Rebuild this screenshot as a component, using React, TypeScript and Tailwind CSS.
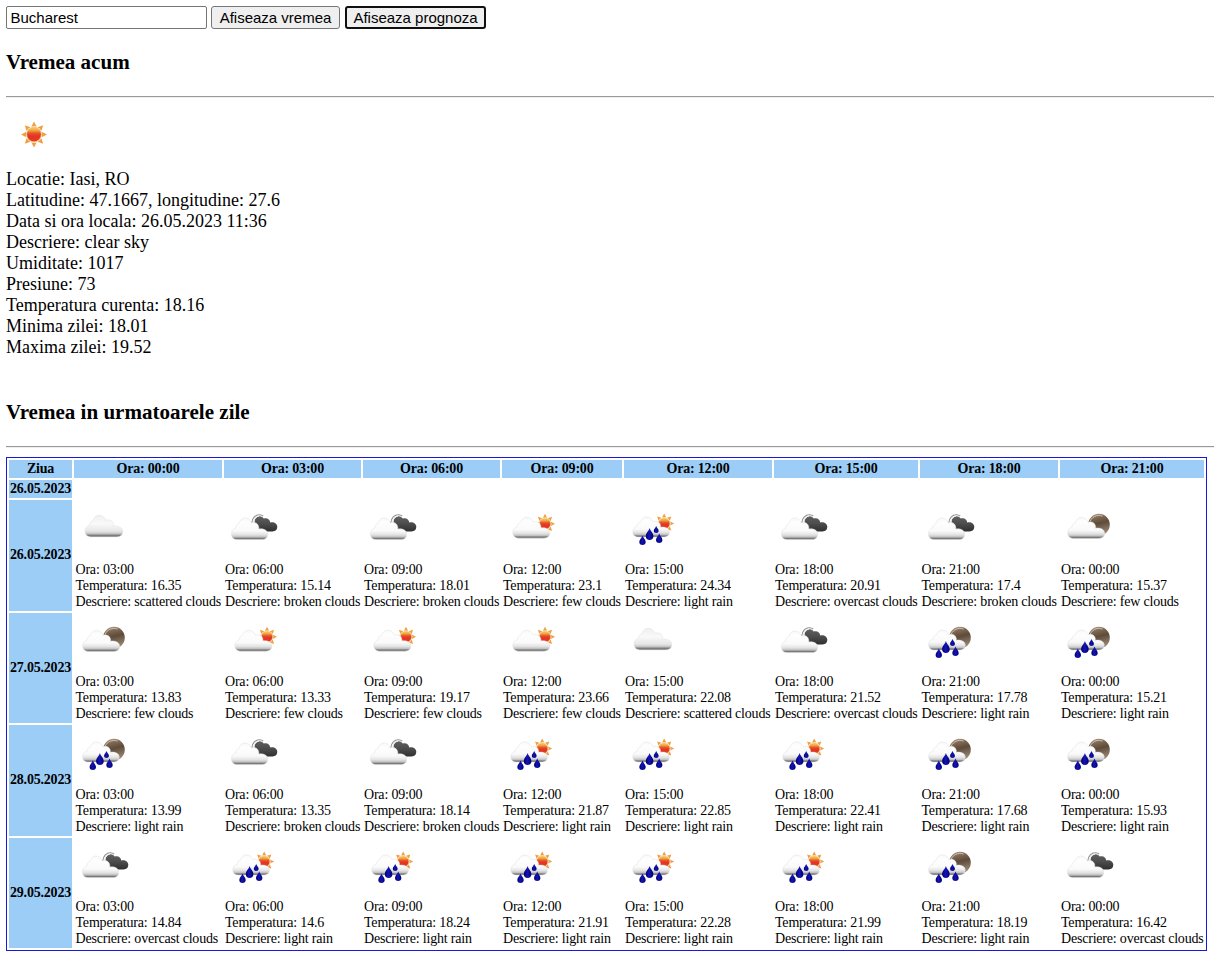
import React from "react";

type Kind = "cloud" | "broken" | "few" | "rain" | "fewNight" | "rainNight" | "clear";
type Entry = [hour: string, temp: string, desc: string, icon: Kind];

const hours = ["00:00", "03:00", "06:00", "09:00", "12:00", "15:00", "18:00", "21:00"];

const days: { date: string; rowClass: string; dateClass: string; iconClass: string; entries: Entry[] }[] = [
  {
    date: "26.05.2023",
    rowClass: "h-[111px]",
    dateClass: "pb-[3px]",
    iconClass: "h-[61px]",
    entries: [
      ["03:00", "16.35", "scattered clouds", "cloud"],
      ["06:00", "15.14", "broken clouds", "broken"],
      ["09:00", "18.01", "broken clouds", "broken"],
      ["12:00", "23.1", "few clouds", "few"],
      ["15:00", "24.34", "light rain", "rain"],
      ["18:00", "20.91", "overcast clouds", "broken"],
      ["21:00", "17.4", "broken clouds", "broken"],
      ["00:00", "15.37", "few clouds", "fewNight"],
    ],
  },
  {
    date: "27.05.2023",
    rowClass: "h-[110px]",
    dateClass: "pb-px",
    iconClass: "h-[60px]",
    entries: [
      ["03:00", "13.83", "few clouds", "fewNight"],
      ["06:00", "13.33", "few clouds", "few"],
      ["09:00", "19.17", "few clouds", "few"],
      ["12:00", "23.66", "few clouds", "few"],
      ["15:00", "22.08", "scattered clouds", "cloud"],
      ["18:00", "21.52", "overcast clouds", "broken"],
      ["21:00", "17.78", "light rain", "rainNight"],
      ["00:00", "15.21", "light rain", "rainNight"],
    ],
  },
  {
    date: "28.05.2023",
    rowClass: "h-[111px]",
    dateClass: "pb-[3px]",
    iconClass: "h-[61px]",
    entries: [
      ["03:00", "13.99", "light rain", "rainNight"],
      ["06:00", "13.35", "broken clouds", "broken"],
      ["09:00", "18.14", "broken clouds", "broken"],
      ["12:00", "21.87", "light rain", "rain"],
      ["15:00", "22.85", "light rain", "rain"],
      ["18:00", "22.41", "light rain", "rain"],
      ["21:00", "17.68", "light rain", "rainNight"],
      ["00:00", "15.93", "light rain", "rainNight"],
    ],
  },
  {
    date: "29.05.2023",
    rowClass: "h-[110px]",
    dateClass: "pb-px",
    iconClass: "h-[60px]",
    entries: [
      ["03:00", "14.84", "overcast clouds", "broken"],
      ["06:00", "14.6", "light rain", "rain"],
      ["09:00", "18.24", "light rain", "rain"],
      ["12:00", "21.91", "light rain", "rain"],
      ["15:00", "22.28", "light rain", "rain"],
      ["18:00", "21.99", "light rain", "rain"],
      ["21:00", "18.19", "light rain", "rainNight"],
      ["00:00", "16.42", "overcast clouds", "broken"],
    ],
  },
];

// Cloud outline in a 38 x 22 box.
const CLOUD =
  "M5.5 21.6C1.8 21.4 0 18.8 0 15.8C0 12.8 1.8 10.6 4.5 10C4.500 7.500 5.800 5.800 8 5.300C9 2 11 0 14 0C17.200 0 19.700 1.800 20.800 5C22.500 4.300 25.500 4.400 27 6C28.300 7.400 28.800 9 28.600 11C33 10.300 37.800 12 37.800 16.200C37.800 19.600 35.500 21.400 32 21.600Z";

const current = [
  "Locatie: Iasi, RO",
  "Latitudine: 47.1667, longitudine: 27.6",
  "Data si ora locala: 26.05.2023 11:36",
  "Descriere: clear sky",
  "Umiditate: 1017",
  "Presiune: 73",
  "Temperatura curenta: 18.16",
  "Minima zilei: 18.01",
  "Maxima zilei: 19.52",
];

function Defs() {
  return (
    <svg className="absolute size-0" aria-hidden="true">
      <defs>
        <linearGradient id="white" x1="0" y1="0" x2="0" y2="1">
          <stop offset="0" stopColor="#f8f8f8" />
          <stop offset="0.2" stopColor="#fefefe" />
          <stop offset="0.6" stopColor="#fafafa" />
          <stop offset="0.78" stopColor="#e2e2e2" />
          <stop offset="0.88" stopColor="#c0c0c0" />
          <stop offset="0.94" stopColor="#7c7c7c" />
          <stop offset="1" stopColor="#6e6e6e" />
        </linearGradient>
        <linearGradient id="plain" x1="0" y1="0" x2="0" y2="1">
          <stop offset="0" stopColor="#f0f0f0" />
          <stop offset="0.4" stopColor="#f9f9f9" />
          <stop offset="0.74" stopColor="#e6e6e6" />
          <stop offset="0.86" stopColor="#c2c2c2" />
          <stop offset="0.92" stopColor="#7c7c7c" />
          <stop offset="1" stopColor="#808080" />
        </linearGradient>
        <linearGradient id="dark" x1="0" y1="0" x2="0" y2="1">
          <stop offset="0" stopColor="#606060" />
          <stop offset="0.5" stopColor="#4c4c4c" />
          <stop offset="1" stopColor="#303030" />
        </linearGradient>
        <linearGradient id="sun" x1="0" y1="0" x2="0" y2="1">
          <stop offset="0" stopColor="#f3d06a" />
          <stop offset="0.22" stopColor="#eda840" />
          <stop offset="0.42" stopColor="#e8502c" />
          <stop offset="0.6" stopColor="#e43422" />
          <stop offset="1" stopColor="#e63c26" />
        </linearGradient>
        <linearGradient id="moon" x1="0.35" y1="0" x2="0.6" y2="1">
          <stop offset="0" stopColor="#a8937d" />
          <stop offset="0.2" stopColor="#7d6752" />
          <stop offset="0.45" stopColor="#5e4b3a" />
          <stop offset="1" stopColor="#a3907c" />
        </linearGradient>
        <linearGradient id="drop" x1="0" y1="0" x2="1" y2="0">
          <stop offset="0" stopColor="#00006a" />
          <stop offset="0.45" stopColor="#1414b4" />
          <stop offset="1" stopColor="#000078" />
        </linearGradient>
      </defs>
    </svg>
  );
}

function Sun({ x, y, s = 1 }: { x: number; y: number; s?: number }) {
  return (
    <g transform={`translate(${x} ${y}) scale(${s})`}>
      {[0, 45, 90, 135, 180, 225, 270, 315].map((a) => (
        <path key={a} d="M-2.700 -7.700L0 -13L2.700 -7.700Q0 -8.700 -2.700 -7.700Z" fill="#eea040" transform={`rotate(${a})`} />
      ))}
      <circle r="7.3" fill="url(#sun)" stroke="#f3b860" strokeWidth="0.7" />
    </g>
  );
}

function Moon({ x, y }: { x: number; y: number }) {
  return (
    <g>
      <circle cx={x} cy={y} r="10.8" fill="url(#moon)" />
      <path d={`M${x - 9.3} ${y - 1.5}A9.3 9.3 0 0 1 ${x + 3.5} ${y - 8.5}`} fill="none" stroke="#cfc0ae" strokeWidth="1" />
    </g>
  );
}

function Drop({ x, y, w, h }: { x: number; y: number; w: number; h: number }) {
  return (
    <path
      transform={`translate(${x} ${y}) scale(${w} ${h})`}
      d="M0 -0.5C0.12 -0.23 0.5 -0.08 0.5 0.18C0.5 0.38 0.3 0.5 0 0.5C-0.3 0.5 -0.5 0.38 -0.5 0.18C-0.5 -0.08 -0.12 -0.23 0 -0.5Z"
      fill="url(#drop)"
    />
  );
}

function Cloud({ x, y, sx = 1, sy = 1, fill = "url(#white)" }: { x: number; y: number; sx?: number; sy?: number; fill?: string }) {
  return (
    <path
      d={CLOUD}
      transform={`translate(${x} ${y}) scale(${sx} ${sy})`}
      fill={fill}
      stroke="#e0e0e0"
      strokeWidth="0.5"
    />
  );
}

function Drops({ x = 0 }: { x?: number }) {
  return (
    <g transform={`translate(${x} 0)`}>
      <Drop x={17.3} y={39.3} w={6.4} h={9.6} />
      <Drop x={24.4} y={33} w={7.6} h={12} />
      <Drop x={31} y={28.6} w={4.8} h={7} />
      <Drop x={34} y={37.2} w={6.4} h={9.6} />
    </g>
  );
}

function WeatherIcon({ kind }: { kind: Kind }) {
  return (
    <svg width="56" height="56" viewBox="0 0 56 56" className="block" aria-hidden="true">
      {kind === "clear" && <Sun x={28} y={28.5} />}
      {kind === "cloud" && <Cloud x={9} y={14.3} fill="url(#plain)" />}
      {kind === "broken" && (
        <g>
          <path
            d="M29.500 20C29.800 17 32 15.200 34.500 15.200C36.500 15.200 38 16.200 38.800 17.600C41.800 16.400 45 18.200 45.200 21.400C49 20.600 52.300 22.500 52.300 25.800C52.300 28.800 50.500 30.400 47.500 30.400H36L30 27Z"
            fill="url(#dark)"
          />
          <path d="M26.800 22C27.200 17 30.500 13.700 34.500 13.700C36 13.700 37.300 14.200 38.200 15.200" fill="none" stroke="#8e8e8e" strokeWidth="1.100" />
          <path d="M28.600 22C28.600 18.500 30.800 15.600 34 14.900" fill="none" stroke="#f0f0f0" strokeWidth="1.200" />
          <Cloud x={6.4} y={17} sx={0.96} />
        </g>
      )}
      {kind === "few" && (
        <g>
          <Sun x={42} y={22.8} s={0.77} />
          <Cloud x={9.8} y={16.2} sx={0.98} sy={0.97} />
        </g>
      )}
      {kind === "rain" && (
        <g>
          <Sun x={39.2} y={22.5} s={0.77} />
          <Cloud x={7.8} y={16} sx={0.97} sy={0.93} />
          <Drops x={0.2} />
        </g>
      )}
      {kind === "fewNight" && (
        <g>
          <Moon x={38} y={23.6} />
          <Cloud x={6.6} y={16.5} sx={0.98} sy={0.97} />
        </g>
      )}
      {kind === "rainNight" && (
        <g>
          <Moon x={38} y={23.6} />
          <Cloud x={6.6} y={16} sx={0.97} sy={0.93} />
          <Drops x={-0.5} />
        </g>
      )}
    </svg>
  );
}

function Rule() {
  return <div className="h-[2px] border-t border-b border-t-[#9a9a9a] border-b-[#eeeeee]" />;
}

export default function App() {
  return (
    <main className="h-[959px] overflow-hidden bg-white pt-[6px] pl-[6px] font-['Liberation_Serif',serif] text-[18px] leading-[21px] text-black">
      <Defs />
      <div className="flex h-[23px] font-['Liberation_Sans',sans-serif] text-[15px] leading-[17px]">
        <input
          defaultValue="Bucharest"
          className="h-[23px] w-[201px] rounded-[2px] border border-[#767676] bg-white px-[3.5px] outline-none"
        />
        <button className="ml-[4px] h-[23px] w-[129px] rounded-[3px] border border-[#767676] bg-[#efefef] whitespace-nowrap">
          Afiseaza vremea
        </button>
        <button className="ml-[5px] h-[23px] w-[141px] rounded-[3px] border-2 border-[#101010] bg-[#efefef] whitespace-nowrap">
          Afiseaza prognoza
        </button>
      </div>

      <h3 className="mt-[21px] text-[21.06px] leading-[24px] font-bold">Vremea acum</h3>
      <div className="mt-[22px]">
        <Rule />
      </div>
      <div className="mt-[8px] h-[63px]">
        <WeatherIcon kind="clear" />
      </div>
      <div className="whitespace-nowrap">
        {current.map((line) => (
          <p key={line}>{line}</p>
        ))}
      </div>

      <h3 className="mt-[42px] text-[21.06px] leading-[24px] font-bold">Vremea in urmatoarele zile</h3>
      <div className="mt-[22px]">
        <Rule />
      </div>

      <table className="mt-[9px] w-[1201px] table-fixed border-separate border-spacing-[2px] border border-[#1818d8] text-[14px] leading-[16px] tracking-[-0.2px] whitespace-nowrap">
        <colgroup>
          <col className="w-[63px]" />
          <col className="w-[148px]" />
          <col className="w-[137px]" />
          <col className="w-[137px]" />
          <col className="w-[120px]" />
          <col className="w-[148px]" />
          <col className="w-[144px]" />
          <col className="w-[138px]" />
          <col className="w-[144px]" />
        </colgroup>
        <thead>
          <tr className="h-[18px]">
            <th className="bg-[#9bcdf7] p-px">Ziua</th>
            {hours.map((h) => (
              <th key={h} className="bg-[#9bcdf7] p-px">
                Ora: {h}
              </th>
            ))}
          </tr>
        </thead>
        <tbody>
          <tr className="h-[18px]">
            <th className="bg-[#9bcdf7] p-px">26.05.2023</th>
          </tr>
          {days.map((d) => (
            <tr key={d.date} className={d.rowClass}>
              <th className={`bg-[#9bcdf7] px-px pt-px ${d.dateClass}`}>{d.date}</th>
              {d.entries.map(([hour, temp, desc, icon], i) => (
                <td key={i} className={`py-px pr-0 align-top ${i === 0 || i === 6 ? "pl-[1.5px]" : "pl-px"}`}>
                  <div className={d.iconClass}>
                    <WeatherIcon kind={icon} />
                  </div>
                  <p>Ora: {hour}</p>
                  <p>Temperatura: {temp}</p>
                  <p>Descriere: {desc}</p>
                </td>
              ))}
            </tr>
          ))}
        </tbody>
      </table>
    </main>
  );
}
